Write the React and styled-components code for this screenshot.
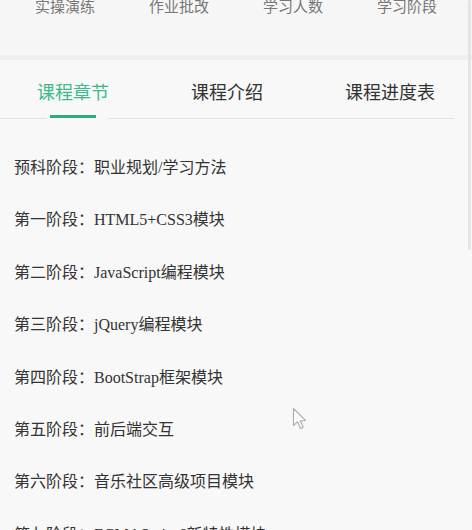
import styled, { createGlobalStyle } from "styled-components";
import { useState } from "react";

const GlobalStyle = createGlobalStyle`
  html, body {
    margin: 0;
    padding: 0;
    background: #f8f8f8;
  }
  body {
    font-family: "Noto Sans CJK SC", "Noto Sans", sans-serif;
    overflow: hidden;
  }
`;

const Page = styled.div`
  position: relative;
  width: 472px;
  min-height: 530px;
  background: #f8f8f8;
`;

const Stats = styled.div`
  display: flex;
  padding: 0 8px;
  height: 55px;
  background: #f6f6f6;
  border-bottom: 5px solid #efefef;
`;

const StatLabel = styled.div`
  flex: 1;
  text-align: center;
  font-size: 15px;
  line-height: 14px;
  margin-top: -1px;
  color: #777;
`;

const Tabs = styled.div`
  display: flex;
  justify-content: space-between;
  padding: 0 37px;
  margin-right: 18px;
  padding-right: 19px;
  height: 58px;
  border-bottom: 1px solid #e2e2e2;
`;

const Tab = styled.div`
  position: relative;
  font-size: 18px;
  line-height: 62px;
  color: ${(props) => (props.active ? "#3dba8c" : "#333")};
  cursor: pointer;

  ${(props) =>
    props.active &&
    `
    &::before {
      content: "";
      position: absolute;
      left: 10px;
      right: 1px;
      bottom: -1px;
      height: 1px;
      background: #f8f8f8;
    }
    &::after {
      content: "";
      position: absolute;
      left: 13px;
      width: 46px;
      bottom: 0;
      height: 3px;
      background: #2fab7e;
    }
  `}
`;

const Chapters = styled.ul`
  list-style: none;
  margin: 0;
  padding: 23px 0 0 14px;
`;

const Chapter = styled.li`
  height: 52.4px;
  line-height: 52px;
  font-family: "Liberation Serif", "Noto Sans CJK SC", serif;
  font-size: 16px;
  color: #333;
`;

const ScrollThumb = styled.div`
  position: absolute;
  top: 0;
  right: 1px;
  width: 3px;
  height: 250px;
  border-radius: 2px;
  background: #e4e4e4;
`;

const Cursor = styled.svg`
  position: absolute;
  left: 292px;
  top: 407px;
  opacity: 0.55;
`;

const stats = ["实操演练", "作业批改", "学习人数", "学习阶段"];
const tabs = ["课程章节", "课程介绍", "课程进度表"];
const chapters = [
  "预科阶段：职业规划/学习方法",
  "第一阶段：HTML5+CSS3模块",
  "第二阶段：JavaScript编程模块",
  "第三阶段：jQuery编程模块",
  "第四阶段：BootStrap框架模块",
  "第五阶段：前后端交互",
  "第六阶段：音乐社区高级项目模块",
  "第七阶段：ECMAScript6新特性模块",
];

const App = () => {
  const [current, setCurrent] = useState(0);

  return (
    <Page>
      <GlobalStyle />
      <Stats>
        {stats.map((label) => (
          <StatLabel key={label}>{label}</StatLabel>
        ))}
      </Stats>
      <Tabs>
        {tabs.map((tab, i) => (
          <Tab key={tab} active={i === current} onClick={() => setCurrent(i)}>
            {tab}
          </Tab>
        ))}
      </Tabs>
      <Chapters>
        {chapters.map((chapter) => (
          <Chapter key={chapter}>{chapter}</Chapter>
        ))}
      </Chapters>
      <ScrollThumb />
      <Cursor width="16" height="24" viewBox="0 0 16 24">
        <path
          d="M1.5 1.5 L1.5 18.5 L5.5 14.8 L8.6 21.5 L11.2 20.3 L8.2 13.8 L13.5 13.5 Z"
          fill="#fff"
          stroke="#777"
          strokeWidth="1.2"
          strokeLinejoin="round"
        />
      </Cursor>
    </Page>
  );
};

export default App;
